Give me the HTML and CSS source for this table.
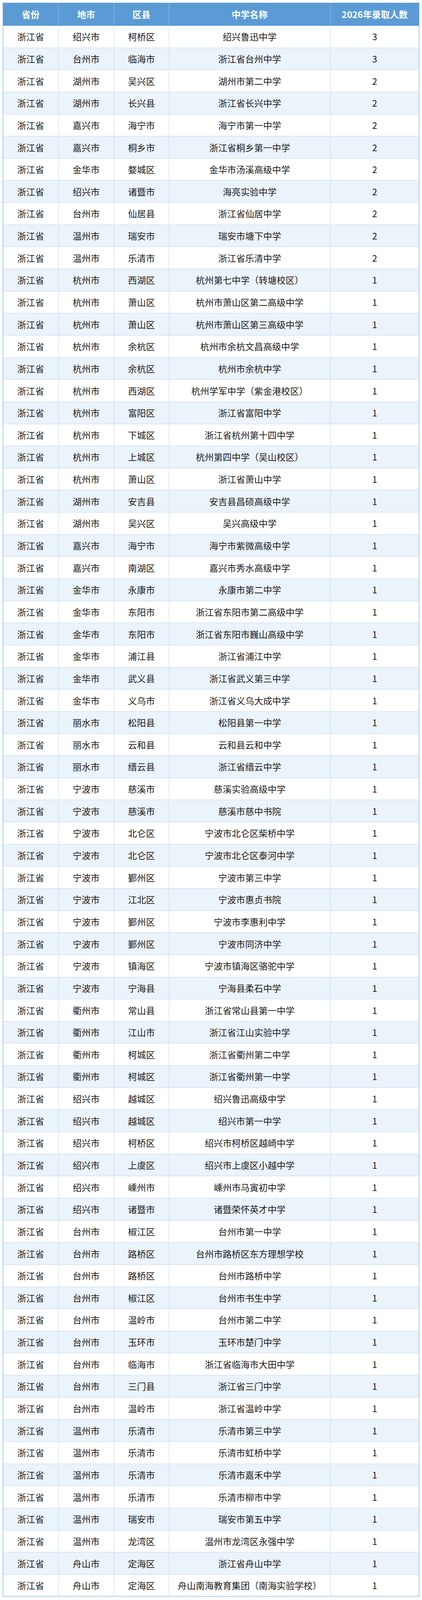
FILE: index.html
```html
<!DOCTYPE html>
<html lang="zh-CN">
<head>
<meta charset="utf-8">
<title>2026年录取人数</title>
<link rel="stylesheet" href="styles.css">
</head>
<body>
<table class="sheet">
<colgroup>
<col class="c-prov"><col class="c-city"><col class="c-dist"><col class="c-school"><col class="c-num">
</colgroup>
<thead>
<tr><th>省份</th><th>地市</th><th>区县</th><th>中学名称</th><th>2026年录取人数</th></tr>
</thead>
<tbody>
<tr><td>浙江省</td><td>绍兴市</td><td>柯桥区</td><td>绍兴鲁迅中学</td><td>3</td></tr>
<tr><td>浙江省</td><td>台州市</td><td>临海市</td><td>浙江省台州中学</td><td>3</td></tr>
<tr><td>浙江省</td><td>湖州市</td><td>吴兴区</td><td>湖州市第二中学</td><td>2</td></tr>
<tr><td>浙江省</td><td>湖州市</td><td>长兴县</td><td>浙江省长兴中学</td><td>2</td></tr>
<tr><td>浙江省</td><td>嘉兴市</td><td>海宁市</td><td>海宁市第一中学</td><td>2</td></tr>
<tr><td>浙江省</td><td>嘉兴市</td><td>桐乡市</td><td>浙江省桐乡第一中学</td><td>2</td></tr>
<tr><td>浙江省</td><td>金华市</td><td>婺城区</td><td>金华市汤溪高级中学</td><td>2</td></tr>
<tr><td>浙江省</td><td>绍兴市</td><td>诸暨市</td><td>海亮实验中学</td><td>2</td></tr>
<tr><td>浙江省</td><td>台州市</td><td>仙居县</td><td>浙江省仙居中学</td><td>2</td></tr>
<tr><td>浙江省</td><td>温州市</td><td>瑞安市</td><td>瑞安市塘下中学</td><td>2</td></tr>
<tr><td>浙江省</td><td>温州市</td><td>乐清市</td><td>浙江省乐清中学</td><td>2</td></tr>
<tr><td>浙江省</td><td>杭州市</td><td>西湖区</td><td>杭州第七中学（转塘校区）</td><td>1</td></tr>
<tr><td>浙江省</td><td>杭州市</td><td>萧山区</td><td>杭州市萧山区第二高级中学</td><td>1</td></tr>
<tr><td>浙江省</td><td>杭州市</td><td>萧山区</td><td>杭州市萧山区第三高级中学</td><td>1</td></tr>
<tr><td>浙江省</td><td>杭州市</td><td>余杭区</td><td>杭州市余杭文昌高级中学</td><td>1</td></tr>
<tr><td>浙江省</td><td>杭州市</td><td>余杭区</td><td>杭州市余杭中学</td><td>1</td></tr>
<tr><td>浙江省</td><td>杭州市</td><td>西湖区</td><td>杭州学军中学（紫金港校区）</td><td>1</td></tr>
<tr><td>浙江省</td><td>杭州市</td><td>富阳区</td><td>浙江省富阳中学</td><td>1</td></tr>
<tr><td>浙江省</td><td>杭州市</td><td>下城区</td><td>浙江省杭州第十四中学</td><td>1</td></tr>
<tr><td>浙江省</td><td>杭州市</td><td>上城区</td><td>杭州第四中学（吴山校区）</td><td>1</td></tr>
<tr><td>浙江省</td><td>杭州市</td><td>萧山区</td><td>浙江省萧山中学</td><td>1</td></tr>
<tr><td>浙江省</td><td>湖州市</td><td>安吉县</td><td>安吉县昌硕高级中学</td><td>1</td></tr>
<tr><td>浙江省</td><td>湖州市</td><td>吴兴区</td><td>吴兴高级中学</td><td>1</td></tr>
<tr><td>浙江省</td><td>嘉兴市</td><td>海宁市</td><td>海宁市紫微高级中学</td><td>1</td></tr>
<tr><td>浙江省</td><td>嘉兴市</td><td>南湖区</td><td>嘉兴市秀水高级中学</td><td>1</td></tr>
<tr><td>浙江省</td><td>金华市</td><td>永康市</td><td>永康市第二中学</td><td>1</td></tr>
<tr><td>浙江省</td><td>金华市</td><td>东阳市</td><td>浙江省东阳市第二高级中学</td><td>1</td></tr>
<tr><td>浙江省</td><td>金华市</td><td>东阳市</td><td>浙江省东阳市巍山高级中学</td><td>1</td></tr>
<tr><td>浙江省</td><td>金华市</td><td>浦江县</td><td>浙江省浦江中学</td><td>1</td></tr>
<tr><td>浙江省</td><td>金华市</td><td>武义县</td><td>浙江省武义第三中学</td><td>1</td></tr>
<tr><td>浙江省</td><td>金华市</td><td>义乌市</td><td>浙江省义乌大成中学</td><td>1</td></tr>
<tr><td>浙江省</td><td>丽水市</td><td>松阳县</td><td>松阳县第一中学</td><td>1</td></tr>
<tr><td>浙江省</td><td>丽水市</td><td>云和县</td><td>云和县云和中学</td><td>1</td></tr>
<tr><td>浙江省</td><td>丽水市</td><td>缙云县</td><td>浙江省缙云中学</td><td>1</td></tr>
<tr><td>浙江省</td><td>宁波市</td><td>慈溪市</td><td>慈溪实验高级中学</td><td>1</td></tr>
<tr><td>浙江省</td><td>宁波市</td><td>慈溪市</td><td>慈溪市慈中书院</td><td>1</td></tr>
<tr><td>浙江省</td><td>宁波市</td><td>北仑区</td><td>宁波市北仑区柴桥中学</td><td>1</td></tr>
<tr><td>浙江省</td><td>宁波市</td><td>北仑区</td><td>宁波市北仑区泰河中学</td><td>1</td></tr>
<tr><td>浙江省</td><td>宁波市</td><td>鄞州区</td><td>宁波市第三中学</td><td>1</td></tr>
<tr><td>浙江省</td><td>宁波市</td><td>江北区</td><td>宁波市惠贞书院</td><td>1</td></tr>
<tr><td>浙江省</td><td>宁波市</td><td>鄞州区</td><td>宁波市李惠利中学</td><td>1</td></tr>
<tr><td>浙江省</td><td>宁波市</td><td>鄞州区</td><td>宁波市同济中学</td><td>1</td></tr>
<tr><td>浙江省</td><td>宁波市</td><td>镇海区</td><td>宁波市镇海区骆驼中学</td><td>1</td></tr>
<tr><td>浙江省</td><td>宁波市</td><td>宁海县</td><td>宁海县柔石中学</td><td>1</td></tr>
<tr><td>浙江省</td><td>衢州市</td><td>常山县</td><td>浙江省常山县第一中学</td><td>1</td></tr>
<tr><td>浙江省</td><td>衢州市</td><td>江山市</td><td>浙江省江山实验中学</td><td>1</td></tr>
<tr><td>浙江省</td><td>衢州市</td><td>柯城区</td><td>浙江省衢州第二中学</td><td>1</td></tr>
<tr><td>浙江省</td><td>衢州市</td><td>柯城区</td><td>浙江省衢州第一中学</td><td>1</td></tr>
<tr><td>浙江省</td><td>绍兴市</td><td>越城区</td><td>绍兴鲁迅高级中学</td><td>1</td></tr>
<tr><td>浙江省</td><td>绍兴市</td><td>越城区</td><td>绍兴市第一中学</td><td>1</td></tr>
<tr><td>浙江省</td><td>绍兴市</td><td>柯桥区</td><td>绍兴市柯桥区越崎中学</td><td>1</td></tr>
<tr><td>浙江省</td><td>绍兴市</td><td>上虞区</td><td>绍兴市上虞区小越中学</td><td>1</td></tr>
<tr><td>浙江省</td><td>绍兴市</td><td>嵊州市</td><td>嵊州市马寅初中学</td><td>1</td></tr>
<tr><td>浙江省</td><td>绍兴市</td><td>诸暨市</td><td>诸暨荣怀英才中学</td><td>1</td></tr>
<tr><td>浙江省</td><td>台州市</td><td>椒江区</td><td>台州市第一中学</td><td>1</td></tr>
<tr><td>浙江省</td><td>台州市</td><td>路桥区</td><td>台州市路桥区东方理想学校</td><td>1</td></tr>
<tr><td>浙江省</td><td>台州市</td><td>路桥区</td><td>台州市路桥中学</td><td>1</td></tr>
<tr><td>浙江省</td><td>台州市</td><td>椒江区</td><td>台州市书生中学</td><td>1</td></tr>
<tr><td>浙江省</td><td>台州市</td><td>温岭市</td><td>台州市第二中学</td><td>1</td></tr>
<tr><td>浙江省</td><td>台州市</td><td>玉环市</td><td>玉环市楚门中学</td><td>1</td></tr>
<tr><td>浙江省</td><td>台州市</td><td>临海市</td><td>浙江省临海市大田中学</td><td>1</td></tr>
<tr><td>浙江省</td><td>台州市</td><td>三门县</td><td>浙江省三门中学</td><td>1</td></tr>
<tr><td>浙江省</td><td>台州市</td><td>温岭市</td><td>浙江省温岭中学</td><td>1</td></tr>
<tr><td>浙江省</td><td>温州市</td><td>乐清市</td><td>乐清市第三中学</td><td>1</td></tr>
<tr><td>浙江省</td><td>温州市</td><td>乐清市</td><td>乐清市虹桥中学</td><td>1</td></tr>
<tr><td>浙江省</td><td>温州市</td><td>乐清市</td><td>乐清市嘉禾中学</td><td>1</td></tr>
<tr><td>浙江省</td><td>温州市</td><td>乐清市</td><td>乐清市柳市中学</td><td>1</td></tr>
<tr><td>浙江省</td><td>温州市</td><td>瑞安市</td><td>瑞安市第五中学</td><td>1</td></tr>
<tr><td>浙江省</td><td>温州市</td><td>龙湾区</td><td>温州市龙湾区永强中学</td><td>1</td></tr>
<tr><td>浙江省</td><td>舟山市</td><td>定海区</td><td>浙江省舟山中学</td><td>1</td></tr>
<tr><td>浙江省</td><td>舟山市</td><td>定海区</td><td>舟山南海教育集团（南海实验学校）</td><td>1</td></tr>
</tbody>
</table>
</body>
</html>
```

FILE: styles.css
```css
html, body {
  margin: 0;
  padding: 0;
  background: #ffffff;
}

body {
  padding: 7px 8px 0 7px;
  font-family: "Noto Sans CJK SC", "Noto Sans", sans-serif;
  color: #1a1a1a;
}

.sheet {
  width: 1065px;
  border-collapse: collapse;
  table-layout: fixed;
  border: 1px solid #5b9bd5;
  font-size: 23px;
  line-height: 1;
}

.c-prov { width: 142px; }
.c-city { width: 142px; }
.c-dist { width: 141px; }
.c-school { width: 413px; }
.c-num { width: 227px; }

.sheet th {
  height: 57px;
  padding: 0;
  background: #5b9bd5;
  color: #ffffff;
  font-weight: 700;
  text-align: center;
  vertical-align: middle;
  border-left: 1px solid #9cc2e8;
  border-right: 1px solid #9cc2e8;
  border-top: 1px solid #5b9bd5;
  border-bottom: 1px solid #5b9bd5;
}

.sheet td {
  height: 55.65px;
  padding: 0;
  text-align: center;
  vertical-align: middle;
  white-space: nowrap;
  border: 1px solid #c3d9f0;
  font-weight: 400;
}

.sheet tbody tr:nth-child(even) td {
  background: #ebf3fb;
}

.sheet tbody tr:nth-child(odd) td {
  background: #ffffff;
}

.sheet th:first-child,
.sheet td:first-child {
  border-left: 1px solid #5b9bd5;
}

.sheet th:last-child,
.sheet td:last-child {
  border-right: 1px solid #5b9bd5;
}

.sheet tbody tr:last-child td {
  border-bottom: 1px solid #5b9bd5;
}
```
